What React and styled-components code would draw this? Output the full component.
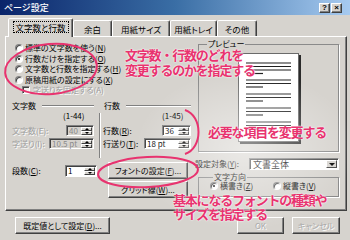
import React from 'react';
import styled, { createGlobalStyle, css } from 'styled-components';

const FACE = '#d6d3ce';
const PINK = '#e8336f';

const GlobalStyle = createGlobalStyle`
  html, body { margin: 0; padding: 0; background: ${FACE}; }
  body { width: 350px; height: 240px; overflow: hidden; font-family: "Noto Sans CJK JP", "Noto Sans", sans-serif; }
  * { box-sizing: border-box; }
`;

const raised = css`
  border: 1px solid;
  border-color: #ffffff #404040 #404040 #ffffff;
  box-shadow: inset -1px -1px 0 #808080;
`;

const sunken = css`
  border: 1px solid;
  border-color: #808080 #ffffff #ffffff #808080;
  box-shadow: inset 1px 1px 0 #404040;
`;

const Dialog = styled.div`
  position: relative;
  width: 350px;
  height: 240px;
  background: ${FACE};
  display: flex;
  flex-direction: column;
  font-size: 8px;
  line-height: 10px;
  color: #000;
  overflow: hidden;
  font-feature-settings: "palt";
`;

const TitleBar = styled.div`
  height: 15px;
  flex: none;
  display: flex;
  align-items: center;
  justify-content: space-between;
  padding: 0 8px 0 4px;
  background: linear-gradient(90deg, #0a246a 0%, #3a6ea5 50%, #a6caf0 100%);
  color: #fff;
  font-size: 9px;
  font-weight: 500;
  line-height: 15px;
`;

const CaptionButtons = styled.div`
  display: flex;
  gap: 1px;
`;

const CaptionButton = styled.div`
  ${raised};
  width: 11px;
  height: 10px;
  background: ${FACE};
  color: #000;
  font-family: "Liberation Sans", sans-serif;
  font-size: 8px;
  font-weight: bold;
  line-height: 8px;
  display: flex;
  align-items: center;
  justify-content: center;
`;

const Body = styled.div`
  flex: none;
  padding: 0 3px 0 5px;
`;

const TabRow = styled.div`
  height: 21px;
  display: flex;
  align-items: flex-end;
  padding-left: 3px;
`;

const Tab = styled.div`
  position: relative;
  z-index: ${p => (p.$active ? 2 : 1)};
  width: ${p => p.$w}px;
  height: ${p => (p.$active ? 19 : 16)}px;
  margin-bottom: ${p => (p.$active ? -1 : 0)}px;
  background: ${FACE};
  border: 1px solid;
  border-bottom: none;
  border-color: #ffffff #404040 transparent #ffffff;
  box-shadow: inset -1px 0 0 #808080;
  border-radius: 2px 2px 0 0;
  display: flex;
  align-items: center;
  justify-content: center;
  padding-bottom: ${p => (p.$active ? 2 : 0)}px;
  font-size: 8.5px;
  line-height: 10px;
  white-space: nowrap;
`;

const Focus = styled.span`
  border: 1px dotted #000;
  padding: 0 2px;
`;

const Panel = styled.div`
  height: 175px;
  display: grid;
  grid-template-columns: 186px 1fr;
  background: ${FACE};
  border: 1px solid;
  border-color: #ffffff #404040 #404040 #ffffff;
  box-shadow: inset -1px -1px 0 #808080;
`;

const LeftCol = styled.div`
  display: flex;
  flex-direction: column;
`;

const RightCol = styled.div`
  display: flex;
  flex-direction: column;
  padding: 0 7px 0 3px;
`;

const RadioList = styled.div`
  display: flex;
  flex-direction: column;
  padding: 6px 0 0 9px;
`;

const OptionRow = styled.div`
  height: ${p => p.$h || 10.5}px;
  display: flex;
  align-items: center;
  gap: ${p => p.$gap ?? 2}px;
  padding-left: ${p => p.$indent || 0}px;
  white-space: nowrap;
`;

const Radio = styled.span`
  flex: none;
  width: 8px;
  height: 8px;
  border-radius: 50%;
  border: 1px solid;
  border-color: #808080 #ffffff #ffffff #808080;
  background: #fff;
  box-shadow: inset 1px 1px 0 #404040;
  display: flex;
  align-items: center;
  justify-content: center;
  &::after {
    content: '';
    width: 2px;
    height: 2px;
    border-radius: 50%;
    background: ${p => (p.$checked ? '#000' : 'transparent')};
  }
`;

const Check = styled.span`
  flex: none;
  width: 8px;
  height: 8px;
  ${sunken};
  background: #f2f1ee;
`;

const Text = styled.span`
  color: ${p => (p.$disabled ? '#9c9c9c' : '#000')};
  text-shadow: ${p => (p.$disabled ? '1px 1px 0 #fff' : 'none')};
  white-space: nowrap;
`;

const FieldsGrid = styled.div`
  margin-top: 5px;
  padding-left: 6px;
  display: grid;
  grid-template-columns: 82px 9px 88px;
  grid-template-rows: 10px auto;
`;

const GroupTitle = styled.div`
  grid-row: 1;
  grid-column: ${p => p.$col};
  display: flex;
  align-items: center;
  gap: 6px;
  padding-left: ${p => p.$pad || 0}px;
  white-space: nowrap;
  &::after {
    content: '';
    flex: 1;
    border-top: 1px solid #808080;
    border-bottom: 1px solid #ffffff;
  }
`;

const FieldColumn = styled.div`
  grid-row: 2;
  grid-column: ${p => p.$col};
  display: flex;
  flex-direction: column;
  gap: 2px;
  padding-bottom: 9px;
`;

const Divider = styled.div`
  grid-row: 2;
  grid-column: 2;
  justify-self: end;
  margin: 2px 2px 0 0;
  width: 2px;
  border-left: 1px solid #808080;
  border-right: 1px solid #ffffff;
`;

const RangeLabel = styled.div`
  align-self: flex-end;
  width: ${p => p.$w}px;
  height: 9px;
  line-height: 9px;
  margin-bottom: 3.5px;
  white-space: nowrap;
`;

const FieldRow = styled.div`
  height: 11px;
  display: flex;
  align-items: center;
  justify-content: space-between;
`;

const SpinField = styled.div`
  flex: none;
  width: ${p => p.$w}px;
  height: ${p => p.$h || 11}px;
  ${sunken};
  background: ${p => (p.$disabled ? FACE : '#fff')};
  color: ${p => (p.$disabled ? '#8a8a8a' : '#000')};
  display: flex;
  align-items: stretch;
  padding: 1px 1px 1px 2px;
`;

const SpinValue = styled.span`
  flex: 1;
  display: flex;
  align-items: center;
  line-height: 8px;
  white-space: nowrap;
`;

const Spinner = styled.div`
  flex: none;
  width: 11px;
  display: flex;
  flex-direction: column;
`;

const SpinBtn = styled.div`
  flex: 1;
  background: ${FACE};
  border: 1px solid;
  border-color: #ffffff #404040 #404040 #ffffff;
  display: flex;
  align-items: center;
  justify-content: center;
  &::after {
    content: '';
    border-left: 2px solid transparent;
    border-right: 2px solid transparent;
    ${p => (p.$down ? 'border-top: 2px solid #000;' : 'border-bottom: 2px solid #000;')}
  }
`;

const LowerRow = styled.div`
  margin-top: 4px;
  padding-left: 6px;
  display: flex;
  align-items: flex-start;
`;

const ColumnsField = styled.div`
  width: 85px;
  height: 17px;
  display: flex;
  align-items: center;
  justify-content: space-between;
`;

const ButtonStack = styled.div`
  margin-left: 11px;
  display: flex;
  flex-direction: column;
  gap: 2px;
`;

const PushButton = styled.div`
  width: ${p => p.$w}px;
  height: 17px;
  ${raised};
  background: ${FACE};
  color: ${p => (p.$disabled ? '#a8a8a8' : '#000')};
  text-shadow: ${p => (p.$disabled ? '1px 1px 0 #fff' : 'none')};
  display: flex;
  align-items: center;
  justify-content: center;
  white-space: nowrap;
  font-size: 8px;
`;

const GroupBox = styled.fieldset`
  margin: ${p => p.$mt}px 0 0 3px;
  height: ${p => p.$h}px;
  padding: ${p => p.$pad};
  border: 1px solid #8a8a8a;
  box-shadow: 1px 1px 0 #ffffff;
  min-width: 0;
`;

const Legend = styled.legend`
  margin-left: ${p => p.$ml}px;
  padding: 0 1px;
  font-size: 8px;
  line-height: 8px;
  white-space: nowrap;
`;

const PreviewArea = styled.div`
  display: flex;
  justify-content: center;
`;

const Paper = styled.div`
  width: 61px;
  height: 89px;
  background: #fff;
  border: 1px solid #6a6a6a;
  box-shadow: 2px 2px 0 #2a2a2a;
  display: flex;
`;

const TargetRow = styled.div`
  margin-top: 6px;
  height: 12px;
  display: flex;
  align-items: center;
  justify-content: space-between;
`;

const Select = styled.div`
  width: 90px;
  height: 12px;
  ${sunken};
  background: #fff;
  display: flex;
  align-items: stretch;
  padding: 1px;
`;

const SelectValue = styled.span`
  flex: 1;
  padding-left: 2px;
  font-size: 9px;
  line-height: 9px;
`;

const SelectArrow = styled.div`
  width: 11px;
  background: ${FACE};
  border: 1px solid;
  border-color: #ffffff #404040 #404040 #ffffff;
  display: flex;
  align-items: center;
  justify-content: center;
  &::after {
    content: '';
    border-left: 3px solid transparent;
    border-right: 3px solid transparent;
    border-top: 3px solid #000;
  }
`;

const DirectionRow = styled.div`
  display: grid;
  grid-template-columns: 63px auto;
  height: 10px;
`;

const Footer = styled.div`
  flex: 1;
  display: flex;
  align-items: flex-start;
  padding: 6px 10px 0 15px;
  gap: 8px;
`;

const Spacer = styled.div`
  flex: 1;
`;

const Glow = styled.div`
  position: absolute;
  inset: 0;
  pointer-events: none;
  background: radial-gradient(ellipse 110px 80px at 245px 150px, rgba(255, 255, 255, 0.5), rgba(255, 255, 255, 0) 100%);
`;

const Marks = styled.svg`
  position: absolute;
  left: 0;
  top: 0;
  pointer-events: none;
`;

const Note = styled.div`
  position: absolute;
  left: ${p => p.$x}px;
  top: ${p => p.$y}px;
  color: ${PINK};
  font-family: "Noto Sans CJK JP", sans-serif;
  font-feature-settings: normal;
  font-size: 13px;
  font-weight: bold;
  line-height: ${p => p.$lh || 15}px;
  letter-spacing: -1.2px;
  white-space: nowrap;
  text-shadow: 0 0 2px #fff, 0 0 1px #fff;
  pointer-events: none;
`;

function Spin({ w, value, disabled, h }) {
  return (
    <SpinField $w={w} $disabled={disabled} $h={h}>
      <SpinValue>{value}</SpinValue>
      <Spinner>
        <SpinBtn />
        <SpinBtn $down />
      </Spinner>
    </SpinField>
  );
}

const PaperLines = () => {
  const rows = [
    [9, 1], [12.5, 1], [16, 1], [19.5, 0],
    [26, 1], [29.5, 1], [33, 0],
    [40, 1], [43.5, 1], [47, 0],
    [54, 1], [57.5, 1], [61, 0],
    [68, 1], [71.5, 1], [75, 0],
  ];
  return (
    <svg width="59" height="87" viewBox="0 0 59 87">
      {rows.map(([y, full], i) => (
        <line key={i} x1="7" x2={full ? 52 : 24} y1={y} y2={y} stroke="#1e1e1e" strokeWidth="1.2" />
      ))}
    </svg>
  );
};

const tabs = [
  { label: '文字数と行数', w: 65, active: true },
  { label: '余白', w: 39 },
  { label: '用紙サイズ', w: 58 },
  { label: '用紙トレイ', w: 47 },
  { label: 'その他', w: 40 },
];

export default function App() {
  return (
    <>
      <GlobalStyle />
      <Dialog>
        <TitleBar>
          <span>ページ設定</span>
          <CaptionButtons>
            <CaptionButton>?</CaptionButton>
            <CaptionButton>×</CaptionButton>
          </CaptionButtons>
        </TitleBar>
        <Body>
          <TabRow>
            {tabs.map(t => (
              <Tab key={t.label} $w={t.w} $active={t.active}>
                {t.active ? <Focus>{t.label}</Focus> : t.label}
              </Tab>
            ))}
          </TabRow>
          <Panel>
            <LeftCol>
              <RadioList>
                <OptionRow><Radio /><Text>標準の文字数を使う(<u>N</u>)</Text></OptionRow>
                <OptionRow><Radio $checked /><Text>行数だけを指定する(<u>O</u>)</Text></OptionRow>
                <OptionRow><Radio /><Text>文字数と行数を指定する(<u>H</u>)</Text></OptionRow>
                <OptionRow><Radio /><Text>原稿用紙の設定にする(<u>X</u>)</Text></OptionRow>
                <OptionRow $indent={7} $gap={3}><Check /><Text $disabled>字送りを固定する(A)</Text></OptionRow>
              </RadioList>
              <FieldsGrid>
                <GroupTitle $col={1}>文字数</GroupTitle>
                <GroupTitle $col={3} $pad={1}>行数</GroupTitle>
                <FieldColumn $col={1}>
                  <RangeLabel $w={31}>(1-44)</RangeLabel>
                  <FieldRow>
                    <Text $disabled>文字数(E):</Text>
                    <Spin w={28} value="40" disabled />
                  </FieldRow>
                  <FieldRow>
                    <Text $disabled>字送り(I):</Text>
                    <Spin w={45} value="10.5 pt" disabled />
                  </FieldRow>
                </FieldColumn>
                <Divider />
                <FieldColumn $col={3}>
                  <RangeLabel $w={29}>(1-45)</RangeLabel>
                  <FieldRow>
                    <Text>行数(<u>R</u>):</Text>
                    <Spin w={29} value="36" />
                  </FieldRow>
                  <FieldRow>
                    <Text>行送り(<u>T</u>):</Text>
                    <Spin w={47} value="18 pt" />
                  </FieldRow>
                </FieldColumn>
              </FieldsGrid>
              <LowerRow>
                <ColumnsField>
                  <Text>段数(<u>C</u>):</Text>
                  <Spin w={32} h={12} value="1" />
                </ColumnsField>
                <ButtonStack>
                  <PushButton $w={80}>フォントの設定(<u>F</u>)...</PushButton>
                  <PushButton $w={80}>グリッド線(<u>W</u>)...</PushButton>
                </ButtonStack>
              </LowerRow>
            </LeftCol>
            <RightCol>
              <GroupBox $mt={3} $h={112} $pad="5px 0 0 0">
                <Legend $ml={8}>プレビュー</Legend>
                <PreviewArea>
                  <Paper>
                    <PaperLines />
                  </Paper>
                </PreviewArea>
              </GroupBox>
              <TargetRow>
                <Text>設定対象(<u>Y</u>):</Text>
                <Select>
                  <SelectValue>文書全体</SelectValue>
                  <SelectArrow />
                </Select>
              </TargetRow>
              <GroupBox $mt={3} $h={24} $pad="0 0 0 11px">
                <Legend $ml={3}>文字方向</Legend>
                <DirectionRow>
                  <OptionRow $h={10}><Radio $checked /><Text>横書き(<u>Z</u>)</Text></OptionRow>
                  <OptionRow $h={10}><Radio /><Text>縦書き(<u>V</u>)</Text></OptionRow>
                </DirectionRow>
              </GroupBox>
            </RightCol>
          </Panel>
        </Body>
        <Footer>
          <PushButton $w={95}>既定値として設定(<u>D</u>)...</PushButton>
          <Spacer />
          <PushButton $w={47} $disabled>OK</PushButton>
          <PushButton $w={48} $disabled>キャンセル</PushButton>
        </Footer>
        <Glow />
        <Marks width="350" height="240" viewBox="0 0 350 240">
          <ellipse cx="51" cy="69" rx="46" ry="25" transform="rotate(-5 51 69)" fill="none" stroke={PINK} strokeWidth="2" />
          <path d="M185 110 C 203 116, 203 148, 185 154" fill="none" stroke={PINK} strokeWidth="2" />
          <ellipse cx="148" cy="172" rx="50" ry="15" transform="rotate(-3 148 172)" fill="none" stroke={PINK} strokeWidth="2" />
        </Marks>
        <Note $x={125} $y={47}>文字数・行数のどれを<br />変更するのかを指定する</Note>
        <Note $x={208} $y={124}>必要な項目を変更する</Note>
        <Note $x={173} $y={193} $lh={14}>基本になるフォントの種類や<br />サイズを指定する</Note>
      </Dialog>
    </>
  );
}
